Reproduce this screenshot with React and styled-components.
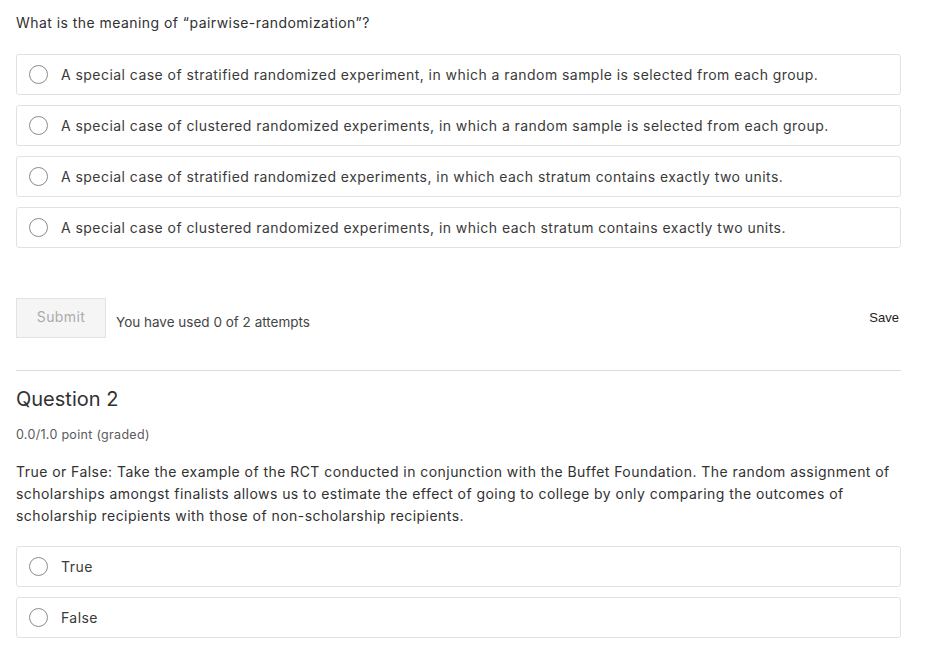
import React from "react";
import styled, { createGlobalStyle } from "styled-components";

const Global = createGlobalStyle`
  html, body { margin: 0; padding: 0; background: #fff; }
  body { font-family: Inter, "Noto Sans", sans-serif; color: #313131; }
`;

const Page = styled.div`
  width: 885px;
  padding: 0 16px;
`;

const Prompt = styled.p`
  margin: 0;
  padding-top: 12px;
  font-size: 14px;
  line-height: 22px;
  letter-spacing: 0.45px;
  color: #313131;
`;

const Options = styled.div`
  display: flex;
  flex-direction: column;
  gap: 10px;
  margin-top: ${(p) => p.$top}px;
`;

const Option = styled.label`
  display: flex;
  align-items: center;
  height: 39px;
  border: 1px solid #e2e2e2;
  border-radius: 3px;
  padding: 0 12px;
  font-size: 14px;
  letter-spacing: 0.45px;
  color: #3a3a3a;
  cursor: pointer;
`;

const Radio = styled.span`
  width: 19px;
  height: 19px;
  border: 1px solid #8a8a8a;
  border-radius: 50%;
  box-sizing: border-box;
  margin-right: 13px;
  flex: none;
`;

const ActionRow = styled.div`
  display: flex;
  align-items: flex-start;
  margin-top: 50px;
`;

const SubmitButton = styled.button`
  width: 90px;
  height: 40px;
  background: #f5f5f5;
  border: 1px solid #e2e2e2;
  border-radius: 0;
  color: #ababab;
  font-family: Inter, "Noto Sans", sans-serif;
  font-size: 14px;
  letter-spacing: 0.4px;
  padding: 0 0 4px;
`;

const Attempts = styled.span`
  margin-left: 10px;
  margin-top: 16px;
  font-size: 13.5px;
  color: #454545;
`;

const SaveLink = styled.span`
  margin-left: auto;
  margin-top: 12px;
  margin-right: 2px;
  font-family: "Liberation Sans", Arial, sans-serif;
  font-size: 13px;
  color: #222;
`;

const Divider = styled.hr`
  border: none;
  border-top: 1px solid #dcdcdc;
  margin: 32px 0 0;
`;

const QuestionTitle = styled.h2`
  margin: 15px 0 0;
  font-size: 20px;
  font-weight: 400;
  line-height: 26px;
  color: #313131;
`;

const Points = styled.div`
  margin-top: 15px;
  font-size: 12.5px;
  letter-spacing: 0.3px;
  color: #5a5a5a;
`;

const Body = styled.p`
  margin: 19px 0 0;
  font-size: 14px;
  line-height: 22px;
  letter-spacing: 0.45px;
  color: #313131;
`;

const q1 = [
  "A special case of stratified randomized experiment, in which a random sample is selected from each group.",
  "A special case of clustered randomized experiments, in which a random sample is selected from each group.",
  "A special case of stratified randomized experiments, in which each stratum contains exactly two units.",
  "A special case of clustered randomized experiments, in which each stratum contains exactly two units.",
];

export default function App() {
  return (
    <Page>
      <Global />
      <Prompt>What is the meaning of “pairwise-randomization”?</Prompt>
      <Options $top={20}>
        {q1.map((t) => (
          <Option key={t}>
            <Radio />
            {t}
          </Option>
        ))}
      </Options>
      <ActionRow>
        <SubmitButton>Submit</SubmitButton>
        <Attempts>You have used 0 of 2 attempts</Attempts>
        <SaveLink>Save</SaveLink>
      </ActionRow>
      <Divider />
      <QuestionTitle>Question 2</QuestionTitle>
      <Points>0.0/1.0 point (graded)</Points>
      <Body>
        True or False: Take the example of the RCT conducted in conjunction with the Buffet Foundation. The random
        assignment of scholarships amongst finalists allows us to estimate the effect of going to college by only
        comparing the outcomes of scholarship recipients with those of non-scholarship recipients.
      </Body>
      <Options $top={19}>
        <Option>
          <Radio />
          True
        </Option>
        <Option>
          <Radio />
          False
        </Option>
      </Options>
    </Page>
  );
}
